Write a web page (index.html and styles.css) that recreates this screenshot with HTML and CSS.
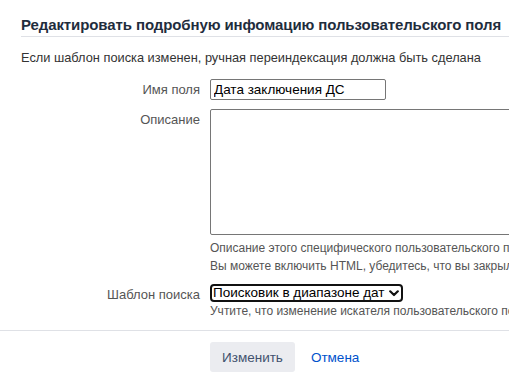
FILE: index.html
```
<!DOCTYPE html>
<html lang="ru">
<head>
<meta charset="utf-8">
<title>Редактировать</title>
<link rel="stylesheet" href="styles.css">
</head>
<body>
<div class="page">
  <h2 class="title">Редактировать подробную инфомацию пользовательского поля</h2>
  <p class="intro">Если шаблон поиска изменен, ручная переиндексация должна быть сделана</p>
  <form class="form">
    <div class="row">
      <label class="label">Имя поля</label>
      <div class="field"><input class="text" type="text" value="Дата заключения ДС"></div>
    </div>
    <div class="row">
      <label class="label label-top">Описание</label>
      <div class="field">
        <textarea class="area"></textarea>
        <div class="help">Описание этого специфического пользовательского поля для использования пользователями.</div>
        <div class="help">Вы можете включить HTML, убедитесь, что вы закрыли все теги.</div>
      </div>
    </div>
    <div class="row row-select">
      <label class="label">Шаблон поиска</label>
      <div class="field">
        <span class="select-wrap">
          <select class="select"><option>Поисковик в диапазоне дат</option></select>
          <svg class="chev" width="10" height="7" viewBox="0 0 10 7"><path d="M1.2 1.3 L5 5 L8.8 1.3" fill="none" stroke="#111" stroke-width="2.2" stroke-linecap="round" stroke-linejoin="round"/></svg>
        </span>
        <div class="help">Учтите, что изменение искателя пользовательского поля может потребовать переиндексации.</div>
      </div>
    </div>
    <div class="actions">
      <button class="btn" type="button">Изменить</button>
      <a class="link" href="#">Отмена</a>
    </div>
  </form>
</div>
</body>
</html>
```
FILE: styles.css
```
html, body {
  margin: 0;
  padding: 0;
  background: #fff;
  overflow: hidden;
}
body {
  font-family: "Segoe UI", "Liberation Sans", Arial, sans-serif;
  color: #333;
  font-size: 12.8px;
}
.page {
  width: 800px;
  padding-left: 21px;
}
.title {
  margin: 0;
  padding-top: 14px;
  padding-bottom: 1px;
  font-size: 15px;
  letter-spacing: -0.1px;
  font-weight: 600;
  line-height: 21px;
  color: #1f2d3d;
  border-bottom: 1px solid #dfe1e6;
}
.intro {
  margin: 11px 0 0 0;
  line-height: 20px;
  color: #333;
}
.form {
  margin-top: 11px;
  margin-left: -6px;
}
.row {
  display: flex;
  align-items: flex-start;
  margin-bottom: 9px;
}
.label {
  width: 195px;
  box-sizing: border-box;
  text-align: right;
  padding-right: 10px;
  color: #555;
  font-size: 13px;
  line-height: 21px;
  flex: none;
}
.label-top {
  padding-top: 0;
}
.field {
  display: flex;
  flex-direction: column;
  align-items: flex-start;
}
.text {
  box-sizing: border-box;
  width: 176px;
  height: 21px;
  margin: 0;
  border: 1px solid #767676;
  border-radius: 2px;
  padding: 0 3px;
  font-family: inherit;
  font-size: 13.5px;
  color: #000;
}
.area {
  box-sizing: border-box;
  width: 500px;
  height: 126px;
  margin: 0;
  border: 1px solid #767676;
  border-radius: 2px;
  resize: none;
  font-family: inherit;
}
.help {
  font-size: 12px;
  line-height: 18px;
  color: #555;
  white-space: nowrap;
}
.area + .help {
  margin-top: 4px;
}
.row-select {
  margin-top: 9px;
}
.select-wrap {
  position: relative;
  display: inline-block;
}
.select {
  appearance: none;
  -webkit-appearance: none;
  box-sizing: border-box;
  width: 193px;
  height: 18px;
  margin: 0;
  border: 2px solid #111;
  border-radius: 4px;
  padding: 0 16px 0 1px;
  font-family: inherit;
  font-size: 13.5px;
  line-height: 14px;
  color: #000;
  background: #fff;
  display: block;
}
.chev {
  position: absolute;
  right: 4px;
  top: 6px;
}
.actions {
  border-top: 1px solid #dfe1e6;
  margin-left: -15px;
  margin-top: 10px;
  padding: 11px 0 0 210px;
  display: flex;
  align-items: center;
  gap: 16px;
}
.btn {
  height: 30px;
  padding: 0 12px;
  border: none;
  border-radius: 3px;
  background: #ebecf0;
  color: #42526e;
  font-family: inherit;
  font-size: 13.5px;
}
.link {
  color: #0052cc;
  font-size: 13.5px;
  text-decoration: none;
}
```
